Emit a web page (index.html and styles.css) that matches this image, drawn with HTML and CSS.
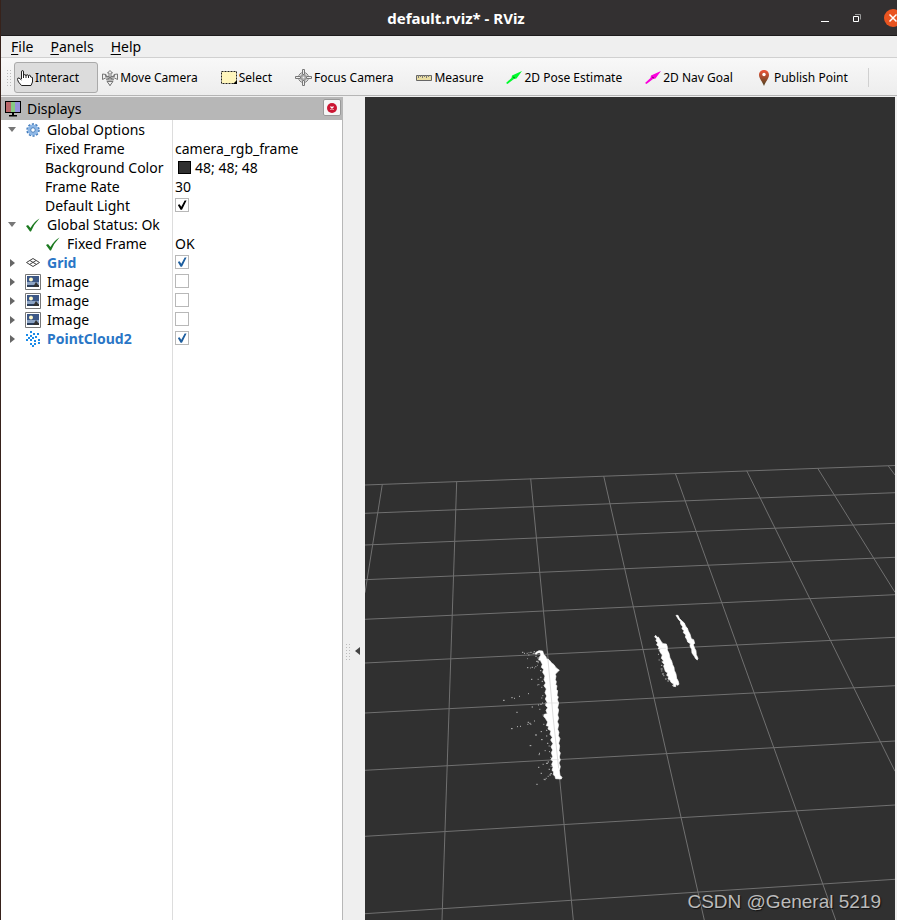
FILE: index.html
```html
<!DOCTYPE html>
<html lang="en">
    <head>
        <meta charset="utf-8">
        <title>default.rviz* - RViz</title>
        <link rel="stylesheet" href="styles.css">
    </head>
    <body>
        <header class="titlebar">
            <h1>default.rviz* - RViz</h1>
            <div class="window-buttons">
                <button aria-label="Minimize"><svg width="10" height="10"><path d="M1 8.5h8" stroke="#fff"/></svg></button>
                <button aria-label="Restore"><svg width="10" height="10" fill="none"><path d="M3 1.5h5.5v5" stroke="#999"/><path d="M1.5 3.5h5v5h-5z" stroke="#fff"/></svg></button>
                <button class="close" aria-label="Close"><svg width="18" height="18"><path d="M5.500 5.500l7 7m0-7l-7 7" stroke="#fff" stroke-width="1.500"/></svg></button>
            </div>
        </header>
        <nav class="menubar">
            <button><u>F</u>ile</button>
            <button><u>P</u>anels</button>
            <button><u>H</u>elp</button>
        </nav>
        <div class="toolbar">
            <span class="grip"></span>
            <button class="active">
                <svg width="16" height="16"><path d="M4.500 9V2Q4.500.5 5.500.5T6.500 2V6Q6.500 4.500 7.700 4.500T9 6Q9 4.700 10.200 4.700T11.500 6.200Q11.700 5.200 12.700 5.200T13.700 7L15.500 7.500V12L14 15.500H4.500L1.500 12L.5 9.500Q.5 7.500 2 8L4.500 10" fill="#fff" stroke="#222"/><path d="M6.500 5v3M9 6v2M11.500 6v2" stroke="#222"/></svg>
                Interact
            </button>
            <button>
                <svg width="16" height="16" fill="#eee" stroke="#777"><path d="M8 .5L10.500 3H9V6.500H12.500L12 4.500L15.500 4V9.500L12.500 8H9.500L10 10.500L8 15.500L6 10.500L6.500 8H3.500L.5 9.500V4L4 4.500L3.500 6.500H7V3H5.500Z"/><path d="M3 5l9 5M4 10l9-5M8 6v8" fill="none"/><path d="M5 11.500h6L8 15.500z"/></svg>
                Move Camera
            </button>
            <button>
                <svg width="16" height="16"><path d="M.5 1.500h15v12H.5z" fill="#fff6bd" stroke="#222" stroke-dasharray="2 1"/><path d="M16 10v4h-4z"/></svg>
                Select
            </button>
            <button>
                <svg width="17" height="17" fill="none" stroke="#777"><circle cx="8.500" cy="8.500" r="5"/><circle cx="8.500" cy="8.500" r="2.500" stroke="#999"/><path d="M7.500.5h2v5h-2zM7.500 11.500h2v5h-2zM.5 7.500h5v2h-5zM11.500 7.500h5v2h-5z" fill="#eee"/><path d="M5 7h7M5 10h7M7 5v7M10 5v7" stroke="#999"/></svg>
                Focus Camera
            </button>
            <button>
                <svg width="16" height="16"><path d="M.5 5.500h15v5H.5z" fill="#e9dda2" stroke="#666"/><path d="M2.500 5v3M4.500 5v2M6.500 5v3M8.500 5v2M10.500 5v3M12.500 5v2" stroke="#777"/></svg>
                Measure
            </button>
            <button>
                <svg width="16" height="16"><path d="M0 13L5.500 8L6 5.500L16 1L10.500 8.500L8 9L1.500 14Z" fill="#00fa2c"/><path d="M7 7l2 1" stroke="#087a16"/></svg>
                2D Pose Estimate
            </button>
            <button>
                <svg width="16" height="16"><path d="M0 13L5.500 8L6 5.500L16 1L10.500 8.500L8 9L1.500 14Z" fill="#fa00dc"/><path d="M7 7l2 1" stroke="#80056f"/></svg>
                2D Nav Goal
            </button>
            <button>
                <svg width="16" height="16"><defs><linearGradient id="pin" x2="0" y2="1"><stop stop-color="#f0563a"/><stop offset="1" stop-color="#4b4220"/></linearGradient></defs><path d="M8 0C4.800 0 3 2.300 3 5C3 8 6.500 12 8 16C9.500 12 13 8 13 5C13 2.300 11.200 0 8 0Z" fill="url(#pin)"/><circle cx="8" cy="4.500" r="1.700" fill="#fff"/></svg>
                Publish Point
            </button>
            <span class="separator"></span>
        </div>

        <main class="workspace">
            <section class="displays">
                <div class="dock-title">
                    <svg width="16" height="16"><path d="M0 0h16v12H0z"/><path d="M1 1h5v10H1z" fill="#b96669"/><path d="M6 1h4v10H6z" fill="#87ca83"/><path d="M10 1h5v10h-5z" fill="#9792dc"/><path d="M7 12h2v2h3v1.500H4V14h3z"/></svg>
                    <h2>Displays</h2>
                    <button aria-label="Close panel"><svg width="10" height="10"><circle cx="5" cy="5" r="5" fill="#cb1633"/><path d="M3.500 3.500l3 3m0-3l-3 3" stroke="#fff" stroke-width="1.200"/></svg></button>
                </div>
                <table class="tree">
                    <tr>
                        <td><div class="item"><i class="arrow open"></i><svg width="14" height="14" fill="none"><circle cx="7" cy="7" r="5.500" stroke="#3f78b8" stroke-width="2.500" stroke-dasharray="2 1.450"/><circle cx="7" cy="7" r="4" stroke="#8db7e6" stroke-width="3"/><circle cx="7" cy="7" r="2.300" stroke="#3f78b8"/></svg>Global Options</div></td>
                        <td></td>
                    </tr>
                    <tr><td class="prop">Fixed Frame</td><td>camera_rgb_frame</td></tr>
                    <tr><td class="prop">Background Color</td><td><div class="color"><i class="swatch"></i>48; 48; 48</div></td></tr>
                    <tr><td class="prop">Frame Rate</td><td>30</td></tr>
                    <tr><td class="prop"><label for="light">Default Light</label></td><td><input id="light" class="dark" type="checkbox" checked></td></tr>
                    <tr>
                        <td><div class="item"><i class="arrow open"></i><svg width="14" height="14"><path d="M0 8L2 7L4.500 10Q8 3.500 13.500.5Q8 6 5 13.500H4Z" fill="#1c7a20"/></svg>Global Status: Ok</div></td>
                        <td></td>
                    </tr>
                    <tr>
                        <td><div class="item child"><svg width="14" height="14"><path d="M0 8L2 7L4.500 10Q8 3.500 13.500.5Q8 6 5 13.500H4Z" fill="#1c7a20"/></svg>Fixed Frame</div></td>
                        <td>OK</td>
                    </tr>
                    <tr>
                        <td><div class="item on"><i class="arrow"></i><svg width="14" height="14" fill="none" stroke="#444"><path d="M.5 6.500L7 2.500L13.500 6.500L7 10.500ZM4 4.500l6.500 4M10 4.500l-6.500 4"/></svg><label for="grid">Grid</label></div></td>
                        <td><input id="grid" type="checkbox" checked></td>
                    </tr>
                    <tr>
                        <td><div class="item"><i class="arrow"></i><svg width="16" height="16"><path d="M.5.5h15v15H.5z" fill="#fff" stroke="#777"/><path d="M2 2h12v11H2z" fill="#3c5785"/><path d="M2 8h12v3H2z" fill="#8da4c4"/><path d="M2 11h12v2H2z" fill="#293c58"/><circle cx="6" cy="5.500" r="2" fill="#fff9cd"/><path d="M8 13l3-5l3 4v1z" fill="#333"/></svg><label for="image1">Image</label></div></td>
                        <td><input id="image1" type="checkbox"></td>
                    </tr>
                    <tr>
                        <td><div class="item"><i class="arrow"></i><svg width="16" height="16"><path d="M.5.5h15v15H.5z" fill="#fff" stroke="#777"/><path d="M2 2h12v11H2z" fill="#3c5785"/><path d="M2 8h12v3H2z" fill="#8da4c4"/><path d="M2 11h12v2H2z" fill="#293c58"/><circle cx="6" cy="5.500" r="2" fill="#fff9cd"/><path d="M8 13l3-5l3 4v1z" fill="#333"/></svg><label for="image2">Image</label></div></td>
                        <td><input id="image2" type="checkbox"></td>
                    </tr>
                    <tr>
                        <td><div class="item"><i class="arrow"></i><svg width="16" height="16"><path d="M.5.5h15v15H.5z" fill="#fff" stroke="#777"/><path d="M2 2h12v11H2z" fill="#3c5785"/><path d="M2 8h12v3H2z" fill="#8da4c4"/><path d="M2 11h12v2H2z" fill="#293c58"/><circle cx="6" cy="5.500" r="2" fill="#fff9cd"/><path d="M8 13l3-5l3 4v1z" fill="#333"/></svg><label for="image3">Image</label></div></td>
                        <td><input id="image3" type="checkbox"></td>
                    </tr>
                    <tr>
                        <td><div class="item on"><i class="arrow"></i><svg width="16" height="16"><path d="M1 4h2M5 1h2M8 3h2M12 3h2M5 5h2M3 7h2M7 7h2M10 6h2M1 9h2M5 9h2M9 10h2M13 9h2M5 13h2M9 13h2M13 12h2M7 15h2" stroke="#1b8be8" stroke-width="2"/></svg><label for="cloud">PointCloud2</label></div></td>
                        <td><input id="cloud" type="checkbox" checked></td>
                    </tr>
                </table>
            </section>

            <button class="splitter" aria-label="Hide left panel"><span class="grip"></span><i></i></button>

            <section class="view">
                <svg class="scene" viewBox="0 0 530 823" preserveAspectRatio="xMinYMin slice">
                    <!-- ground grid -->
                    <g stroke="#707070" fill="none">
                        <path d="M0 388L530 368.500M0 416.300L530 395.700M0 448L530 426.300M0 482.700L530 460.300M0 522.300L530 497.700M0 566L530 540.300M0 616L530 588.700M0 673.300L530 644M0 739.300L530 708M0 816.700L530 782.300"/>
                        <path d="M17.300 387.300L0 495.700M91.700 384.700L77 823M165.700 381.700L208.300 823M238.700 379L339.300 823M310.300 376.300L470.700 823M381.700 373.700L530 674.300M452.700 371.300L530 495.300M523.300 369L530 378"/>
                    </g>
                    <!-- point clouds -->
                    <g transform="translate(125 503) scale(.3333)">
                        <path fill="#fff" stroke="#fff" stroke-width="2" d="M138 157L147 152L158 153L161 163L167 169L170 176L177 179L185 189L192 194L198 203L208 211L202 216L196 223L198 229L196 239L199 245L197 254L201 257L199 268L203 272L201 286L205 291L202 299L206 309L203 323L206 330L203 345L206 355L202 365L206 374L203 388L207 397L205 407L210 416L206 430L209 438L207 452L211 459L208 471L211 480L207 489L211 500L208 512L210 526L216 532L214 537L197 536L195 529L190 524L191 516L186 511L189 502L185 493L189 485L183 478L188 470L184 458L188 450L183 440L189 431L182 420L187 412L180 403L183 393L174 387L176 379L169 377L173 366L166 355L161 349L163 343L172 341L168 331L173 323L166 315L172 308L166 297L170 288L165 278L169 267L162 257L167 249L162 239L165 228L158 217L161 208L154 202L157 193L151 181L146 180L149 170L153 165L150 158L143 159L139 163L135 161Z"/>
                        <path fill="#fff" stroke="#fff" stroke-width="2" d="M497 106L502 112L505 111L514 125L519 131L529 132L532 140L532 150L537 160L540 174L545 183L548 194L552 202L553 211L558 222L560 235L565 244L567 253L563 256L558 253L557 260L550 259L551 252L543 247L540 240L534 237L536 230L530 226L533 219L526 214L524 207L521 199L523 193L517 187L520 181L514 175L517 165L512 159L508 151L511 147L505 147L507 140L500 135L503 128L498 122L500 116L494 111Z"/>
                        <path fill="#fff" stroke="#fff" stroke-width="2" d="M558 46L564 46L568 55L576 63L583 69L587 79L592 84L595 93L600 102L604 116L611 119L614 130L610 134L614 145L618 152L619 164L624 175L622 180L617 176L613 169L606 159L605 148L600 138L601 131L593 126L591 119L586 111L588 105L580 98L582 92L576 86L578 80L572 72L571 64L566 59Z"/>
                        <path stroke="#bbb" stroke-width="3" d="M96 157h4M102 160h3M110 160h3M116 158h2M121 157h4M128 160h6M131 155h4M115 165h3M136 169h4M142 174h5M138 184h8M143 188h3M112 176h2M111 203h4M120 204h2M125 202h4M133 204h2M136 200h3M141 196h2M150 212h4M123 238h4M143 238h3M151 232h3M145 254h3M155 244h4M154 262h3M114 281h3M87 289h3M64 293h4M72 295h3M39 301h5M157 287h3M154 294h3M142 255h2M156 309h3M151 313h4M144 315h3M125 321h4M79 337h4M148 328h3M132 363h3M113 367h4M118 370h4M112 373h3M121 373h3M90 379h3M81 380h3M63 386h5M158 345h3M160 373h3M152 395h4M168 391h4M135 405h6M153 419h5M168 408h4M171 430h4M119 437h5M164 452h3M147 460h3M146 464h3M176 438h3M177 455h3M181 472h3M168 490h6M173 486h4M158 493h3M144 502h4M152 520h4M163 539h4M167 535h3M178 525h5M173 529h3M181 521h5M161 538h3M139 553h4M176 508h4M182 499h3M515 184h5M513 196h4M512 207h6M514 213h3M516 222h6M520 227h3M525 237h5M532 243h5M504 163h3M506 180h3M546 256h4"/>
                        <path d="M174 178L189 348L206 505" fill="none" stroke="#ddd" stroke-width="3"/>
                        <path d="M165 309h40M185 479h22M508 145h20" stroke="#ddd" stroke-width="2"/>
                    </g>
                </svg>
                <p class="watermark">CSDN @General 5219</p>
            </section>
        </main>
    </body>
</html>
```

FILE: styles.css
```css
*{
    box-sizing: border-box;
}
body{
    margin: 0;
    height: 100vh;
    display: flex;
    flex-direction: column;
    overflow: hidden;
    background: #efefef;
    border-left: 1px solid #37221b;
    color: #000;
    font-family: "Noto Sans", "Open Sans", sans-serif;
    font-size: 14px;
}
h1, h2, p{
    margin: 0;
}
svg{
    display: block;
    flex: none;
}
button{
    margin: 0;
    padding: 0;
    border: none;
    background: none;
    color: inherit;
    font: inherit;
}

.titlebar{
    flex: none;
    height: 36px;
    display: grid;
    grid-template-columns: 1fr auto 1fr;
    align-items: center;
    background: #333031;
    border-bottom: 1px solid #1d1b1c;
    color: #fff;
}
.titlebar h1{
    grid-column: 2;
    padding-left: 14px;
    font-size: 15px;
    line-height: 20px;
}
.window-buttons{
    display: flex;
    justify-content: flex-end;
    align-items: center;
    gap: 22px;
    margin-right: -5px;
}
.window-buttons .close{
    border-radius: 50%;
    background: #e95420;
}

.menubar{
    flex: none;
    height: 22px;
    display: flex;
    align-items: center;
    gap: 17px;
    padding-left: 10px;
    border-bottom: 1px solid #d0d0d0;
}
.menubar u{
    text-underline-offset: 2px;
}

.toolbar{
    flex: none;
    height: 38px;
    display: flex;
    align-items: center;
    gap: 1px;
    padding-top: 2px;
    background: linear-gradient(#f8f8f8, #ededed);
    border-bottom: 1px solid #b5b5b5;
    font-size: 12px;
}
.toolbar button{
    flex: none;
    height: 31px;
    display: flex;
    align-items: center;
    gap: 2px;
    padding: 0 18px 0 2px;
    border: 1px solid transparent;
    border-radius: 3px;
    white-space: nowrap;
}
.toolbar .active{
    background: #dcdcdc;
    border-color: #aaa;
}
.grip{
    width: 5px;
    height: 17px;
    background: radial-gradient(circle, #bbb 1px, transparent 1px) 0 0 / 3px 3px;
}
.toolbar .grip{
    margin: 0 2px 0 5px;
}
.separator{
    width: 1px;
    height: 19px;
    background: #d0d0d0;
}

.workspace{
    flex: 1;
    min-height: 0;
    display: flex;
    padding: 1px 2px 0 0;
}
.displays{
    flex: none;
    width: 342px;
    background: #fff;
    border-right: 1px solid #b7b7b7;
}
.dock-title{
    height: 23px;
    display: flex;
    align-items: center;
    gap: 6px;
    padding: 0 1px 0 4px;
    background: #b7b7b7;
}
.dock-title h2{
    flex: 1;
    font-size: 14px;
    font-weight: normal;
    line-height: 20px;
}
.dock-title button{
    width: 18px;
    height: 17px;
    display: flex;
    align-items: center;
    justify-content: center;
    margin-bottom: 2px;
    background: #f6f6f6;
    border: 1px solid #999;
    border-radius: 2px;
}

.tree{
    width: 100%;
    height: calc(100% - 23px);
    display: grid;
    grid-template-columns: 100%;
    align-content: start;
    background: linear-gradient(#ddd, #ddd) 171px 0 / 1px 100% no-repeat;
}
.tree tbody{
    display: block;
}
.tree tr{
    display: grid;
    grid-template-columns: 172px 1fr;
    height: 19px;
    line-height: 19px;
}
.tree td{
    padding: 0 0 0 2px;
    white-space: nowrap;
}
.tree .prop{
    padding-left: 44px;
}
.item{
    display: grid;
    grid-template-columns: 15px 22px auto;
    column-gap: 1px;
    justify-content: start;
    align-items: center;
    justify-items: center;
    height: 19px;
    padding-left: 5px;
}
.item svg{
    margin-right: 4px;
}
.item.child{
    padding-left: 41px;
    grid-template-columns: 22px auto;
}
.item.on{
    color: #2a76c6;
    font-weight: bold;
}
.arrow{
    justify-self: start;
    margin-left: 2px;
    border: 4px solid transparent;
    border-left: 5px solid #666;
    border-right: none;
}
.arrow.open{
    margin-left: 0;
    border: 4px solid transparent;
    border-top: 5px solid #777;
    border-bottom: none;
}
.color{
    display: flex;
    align-items: center;
    gap: 4px;
    padding-left: 3px;
}
.swatch{
    width: 13px;
    height: 13px;
    background: #303030;
    border: 1px solid #000;
}
.tree input{
    appearance: none;
    display: block;
    width: 14px;
    height: 14px;
    margin: 2px 0;
    background: #fff;
    border: 1px solid #b8b8b8;
    color: #1f5f9f;
}
.tree .dark{
    color: #000;
}
.tree input:checked::before{
    content: "";
    display: block;
    height: 12px;
    background: currentColor;
    clip-path: polygon(15% 50%, 30% 43%, 44% 65%, 72% 12%, 88% 12%, 50% 90%, 38% 90%);
}

.splitter{
    flex: none;
    width: 22px;
    display: flex;
    align-items: center;
    gap: 5px;
    padding: 285px 0 0 2px;
    background: #efefef;
}
.splitter i{
    border: 4px solid transparent;
    border-right: 5px solid #444;
    border-left: none;
}

.view{
    flex: 1;
    min-width: 0;
    position: relative;
    background: #303030;
}
.scene{
    width: 100%;
    height: 100%;
}
.watermark{
    position: absolute;
    right: 14px;
    bottom: 6px;
    color: #bbb;
    font-family: "Liberation Sans", Arial, sans-serif;
    font-size: 19px;
    line-height: 24px;
    text-shadow: 1px 1px 1px #111;
}
```
